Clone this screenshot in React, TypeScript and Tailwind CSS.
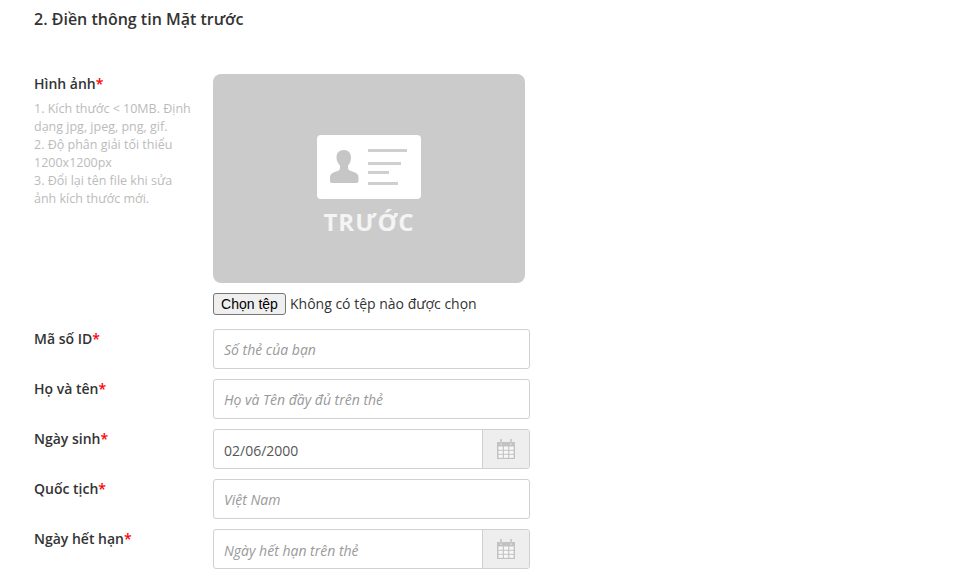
const FONT = "font-['Open_Sans',sans-serif]";

function CalendarIcon() {
  return (
    <svg width="18" height="20" viewBox="0 0 18 20" aria-hidden="true" className="text-[#c2c2c2]">
      <path fill="currentColor" d="M0 3h3v2.500h2V3h8v2.500h2V3h3v17H0z" />
      <rect x="3.2" y="0" width="1.6" height="5" fill="currentColor" />
      <rect x="13.2" y="0" width="1.600" height="5" fill="currentColor" />
      <g fill="#f7f7f7">
        <rect x="1.500" y="7.500" width="4.300" height="3.300" />
        <rect x="6.900" y="7.500" width="4.300" height="3.300" />
        <rect x="12.300" y="7.500" width="4.300" height="3.300" />
        <rect x="1.500" y="11.800" width="4.300" height="3" />
        <rect x="6.900" y="11.800" width="4.300" height="3" />
        <rect x="12.300" y="11.800" width="4.300" height="3" />
        <rect x="1.500" y="15.800" width="4.300" height="3" />
        <rect x="6.900" y="15.800" width="4.300" height="3" />
        <rect x="12.300" y="15.800" width="4.300" height="3" />
      </g>
    </svg>
  );
}

function IdCardIcon() {
  return (
    <svg width="104" height="64" viewBox="0 0 104 64" aria-hidden="true">
      <rect width="104" height="64" rx="4" fill="#ffffff" />
      <path
        fill="#c6c6c6"
        d="M27 15c4.500 0 7 3 7 7.500 0 3.500-1.300 6.300-3 8v2.500c0 1.500 1.200 2.300 3 3l3.500 1.300c2.800 1 4 2.700 4 5.200V46c0 1.300-.8 2-2 2H15c-1.200 0-2-.7-2-2v-3.500c0-2.500 1.200-4.200 4-5.200l3.500-1.300c1.800-.7 2.500-1.500 2.500-3v-2.500c-1.700-1.700-3.500-4.500-3.500-8 0-4.500 2.500-7.500 7.500-7.500z"
      />
      <g fill="#cfcfcf">
        <rect x="51" y="14" width="39" height="3" />
        <rect x="51" y="27" width="33" height="3" />
        <rect x="51" y="36" width="21" height="3" />
        <rect x="51" y="47" width="30" height="3" />
      </g>
    </svg>
  );
}

function Label({ text }: { text: string }) {
  return (
    <label className="block w-[179px] shrink-0 text-sm font-semibold leading-5 text-[#333333]">
      {text}
      <span className="text-[#ff0000]">*</span>
    </label>
  );
}

function TextField({ label, placeholder }: { label: string; placeholder: string }) {
  return (
    <div className="flex h-[50px]">
      <Label text={label} />
      <input
        type="text"
        placeholder={placeholder}
        className="h-10 w-[317px] rounded-[3px] border border-[#d0d0d0] bg-white px-[10px] text-sm italic text-[#555555] outline-none placeholder:text-[#999999]"
      />
    </div>
  );
}

function DateField({ label, placeholder, value }: { label: string; placeholder: string; value?: string }) {
  return (
    <div className="flex h-[50px]">
      <Label text={label} />
      <div className="flex h-10 w-[317px] rounded-[3px] border border-[#d0d0d0] bg-white">
        <input
          type="text"
          placeholder={placeholder}
          defaultValue={value}
          className="h-full min-w-0 flex-1 bg-transparent px-[10px] pt-[2px] text-sm text-[#555555] outline-none placeholder:italic placeholder:text-[#999999]"
        />
        <div className="flex w-[47px] items-center justify-center rounded-r-[3px] border-l border-[#d0d0d0] bg-[#eeeeee]">
          <CalendarIcon />
        </div>
      </div>
    </div>
  );
}

export default function App() {
  return (
    <main className={`h-[583px] overflow-hidden bg-white pl-[34px] pt-[9px] ${FONT}`}>
      <h2 className="text-base font-semibold leading-5 text-[#333333]">2. Điền thông tin Mặt trước</h2>

      <div className="mt-[45px] flex">
        <div className="w-[179px] shrink-0">
          <label className="block text-sm font-semibold leading-5 text-[#333333]">
            Hình ảnh<span className="text-[#ff0000]">*</span>
          </label>
          <p className="mt-[6px] w-[160px] text-[12.5px] leading-[18px] text-[#bbbbbb]">
            1. Kích thước &lt; 10MB. Định dạng jpg, jpeg, png, gif.
            <br />
            2. Độ phân giải tối thiểu 1200x1200px
            <br />
            3. Đổi lại tên file khi sửa ảnh kích thước mới.
          </p>
        </div>
        <div>
          <div className="flex h-[209px] w-[312px] flex-col items-center rounded-lg bg-[#cbcbcb] pt-[61px]">
            <IdCardIcon />
            <span className="mt-[7px] text-[24px] font-bold leading-[32px] tracking-[1px] text-[#f4f4f4]">TRƯỚC</span>
          </div>
          <div className="mt-[10px] flex h-[22px] items-center">
            <button
              type="button"
              className="h-[22px] w-[73px] rounded-[3px] border border-[#767676] bg-[#efefef] font-['Liberation_Sans',sans-serif] text-sm leading-none text-black"
            >
              Chọn tệp
            </button>
            <span className="ml-1 text-sm text-[#333333]">Không có tệp nào được chọn</span>
          </div>
        </div>
      </div>

      <div className="mt-[14px]">
        <TextField label="Mã số ID" placeholder="Số thẻ của bạn" />
        <TextField label="Họ và tên" placeholder="Họ và Tên đầy đủ trên thẻ" />
        <DateField label="Ngày sinh" placeholder="" value="02/06/2000" />
        <TextField label="Quốc tịch" placeholder="Việt Nam" />
        <DateField label="Ngày hết hạn" placeholder="Ngày hết hạn trên thẻ" />
      </div>
    </main>
  );
}
